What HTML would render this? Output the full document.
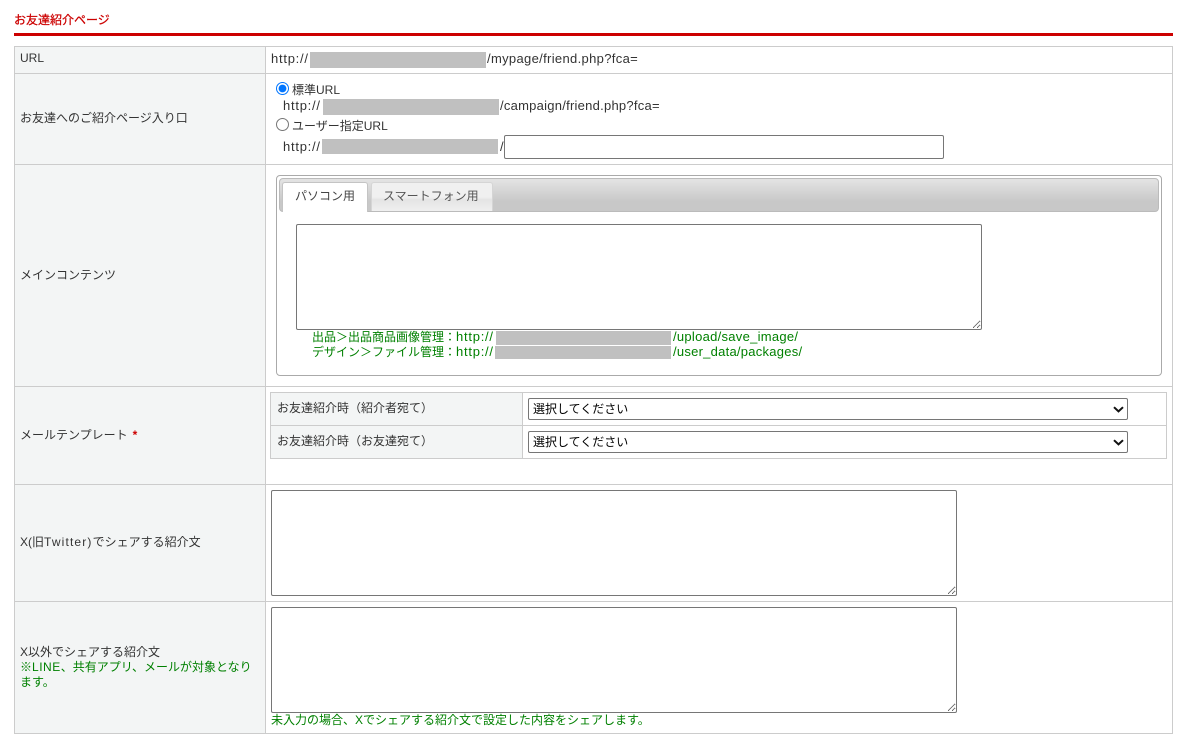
<!DOCTYPE html>
<html lang="ja"><head><meta charset="utf-8"><title>お友達紹介ページ</title>
<style>
html,body{margin:0;padding:0;background:#fff}
body{position:relative;width:1184px;height:749px;overflow:hidden;font-family:"Liberation Sans","Noto Sans CJK JP",sans-serif;font-size:12px;color:#333}
.a{position:absolute}
.t{position:absolute;line-height:16px;white-space:nowrap}
.l{font-size:13px;letter-spacing:.33px}
.p{font-size:13px;letter-spacing:.75px}
.g{color:#008000}
.m{position:absolute;background:#c0c0c0}
.h{position:absolute;background:#ccc;height:1px}
.v{position:absolute;background:#ccc;width:1px}
.b{position:absolute;background:#f3f5f5}
textarea,input[type=text],select{position:absolute;box-sizing:border-box;margin:0;border:1px solid #767676;border-radius:2px;background:#fff;font-family:inherit;font-size:12px;padding:0}
select{appearance:none;-webkit-appearance:none;padding-left:4px;color:#000}
input[type=radio]{position:absolute;margin:0;width:13px;height:13px}
</style></head><body>
<div class="t" style="left:14px;top:12px;color:#c00;-webkit-text-stroke:.25px #c00">お友達紹介ページ</div>
<div class="a" style="left:14px;top:33px;width:1159px;height:3px;background:#c00"></div>

<div class="b" style="left:15px;top:47px;width:250px;height:686px"></div>
<div class="h" style="left:14px;top:46px;width:1159px"></div>
<div class="h" style="left:14px;top:73px;width:1159px"></div>
<div class="h" style="left:14px;top:164px;width:1159px"></div>
<div class="h" style="left:14px;top:386px;width:1159px"></div>
<div class="h" style="left:14px;top:484px;width:1159px"></div>
<div class="h" style="left:14px;top:601px;width:1159px"></div>
<div class="h" style="left:14px;top:733px;width:1159px"></div>
<div class="v" style="left:14px;top:46px;height:688px"></div>
<div class="v" style="left:265px;top:46px;height:688px"></div>
<div class="v" style="left:1172px;top:46px;height:688px"></div>

<div class="t" style="left:20px;top:50px">URL</div>
<div class="t" style="left:20px;top:110px">お友達へのご紹介ページ入り口</div>
<div class="t" style="left:20px;top:267px">メインコンテンツ</div>
<div class="t" style="left:20px;top:427px">メールテンプレート<span style="color:#c00;font-weight:bold;margin-left:5px">*</span></div>
<div class="t" style="left:20px;top:534px">X(旧<span style="letter-spacing:1.15px">Twitter)</span>でシェアする紹介文</div>
<div class="t" style="left:20px;top:644px">X以外でシェアする紹介文</div>
<div class="t g" style="left:20px;top:659px">※<span style="letter-spacing:.5px">LINE</span>、共有アプリ、メールが対象となり</div>
<div class="t g" style="left:20px;top:674px">ます。</div>

<div class="t p" style="left:271px;top:51px">http://</div>
<div class="m" style="left:310px;top:52px;width:176px;height:16px"></div>
<div class="t l" style="left:487px;top:51px">/mypage/friend.php?fca=</div>

<input type="radio" name="r" checked style="left:276px;top:82px">
<div class="t" style="left:292px;top:82px">標準URL</div>
<div class="t p" style="left:283px;top:98px">http://</div>
<div class="m" style="left:323px;top:99px;width:176px;height:16px"></div>
<div class="t l" style="left:500px;top:98px;letter-spacing:.25px">/campaign/friend.php?fca=</div>
<input type="radio" name="r" style="left:276px;top:118px">
<div class="t" style="left:292px;top:118px">ユーザー指定URL</div>
<div class="t p" style="left:283px;top:139px">http://</div>
<div class="m" style="left:322px;top:139px;width:176px;height:15px"></div>
<div class="t l" style="left:500px;top:139px">/</div>
<input type="text" style="left:504px;top:135px;width:440px;height:24px">

<div class="a" style="left:276px;top:175px;width:886px;height:201px;box-sizing:border-box;border:1px solid #aaa;border-radius:4px"></div>
<div class="a" style="left:279px;top:178px;width:880px;height:34px;box-sizing:border-box;border:1px solid #bbb;border-radius:4px;background:linear-gradient(#e4e4e4,#c8c8c8 70%)"></div>
<div class="a" style="left:282px;top:182px;width:86px;height:30px;box-sizing:border-box;border:1px solid #c4c4c4;border-bottom:0;border-radius:3px 3px 0 0;background:#fff"></div>
<div class="a" style="left:371px;top:182px;width:122px;height:29px;box-sizing:border-box;border:1px solid #d5d5d5;border-bottom:0;border-radius:3px 3px 0 0;background:linear-gradient(#f0f0f0 50%,#e4e4e4 60%,#efefef)"></div>
<div class="t" style="left:295px;top:188px;color:#444">パソコン用</div>
<div class="t" style="left:383px;top:188px;color:#555">スマートフォン用</div>
<textarea style="left:296px;top:224px;width:686px;height:106px"></textarea>
<div class="t g" style="left:312px;top:329px">出品＞出品商品画像管理：<span class="p">http://</span></div>
<div class="m" style="left:496px;top:331px;width:175px;height:14px"></div>
<div class="t g l" style="left:673px;top:329px;letter-spacing:.28px">/upload/save_image/</div>
<div class="t g" style="left:312px;top:344px">デザイン＞ファイル管理：<span class="p">http://</span></div>
<div class="m" style="left:495px;top:346px;width:176px;height:13px"></div>
<div class="t g l" style="left:673px;top:344px;letter-spacing:.25px">/user_data/packages/</div>

<div class="b" style="left:271px;top:392px;width:251px;height:66px"></div>
<div class="h" style="left:270px;top:392px;width:897px"></div>
<div class="h" style="left:270px;top:425px;width:897px"></div>
<div class="h" style="left:270px;top:458px;width:897px"></div>
<div class="v" style="left:270px;top:392px;height:67px"></div>
<div class="v" style="left:522px;top:392px;height:67px"></div>
<div class="v" style="left:1166px;top:392px;height:67px"></div>
<div class="t" style="left:277px;top:400px">お友達紹介時（紹介者宛て）</div>
<div class="t" style="left:277px;top:433px">お友達紹介時（お友達宛て）</div>
<select style="left:528px;top:398px;width:600px;height:22px"><option>選択してください</option></select>
<select style="left:528px;top:431px;width:600px;height:22px"><option>選択してください</option></select>
<svg class="a" style="left:1113px;top:406px" width="11" height="7" viewBox="0 0 11 7"><path d="M1 1.2L5.5 5.4L10 1.2" fill="none" stroke="#111" stroke-width="2"/></svg>
<svg class="a" style="left:1113px;top:439px" width="11" height="7" viewBox="0 0 11 7"><path d="M1 1.2L5.5 5.4L10 1.2" fill="none" stroke="#111" stroke-width="2"/></svg>

<textarea style="left:271px;top:490px;width:686px;height:106px"></textarea>
<textarea style="left:271px;top:607px;width:686px;height:106px"></textarea>
<div class="t g" style="left:271px;top:712px">未入力の場合、Xでシェアする紹介文で設定した内容をシェアします。</div>
</body></html>
